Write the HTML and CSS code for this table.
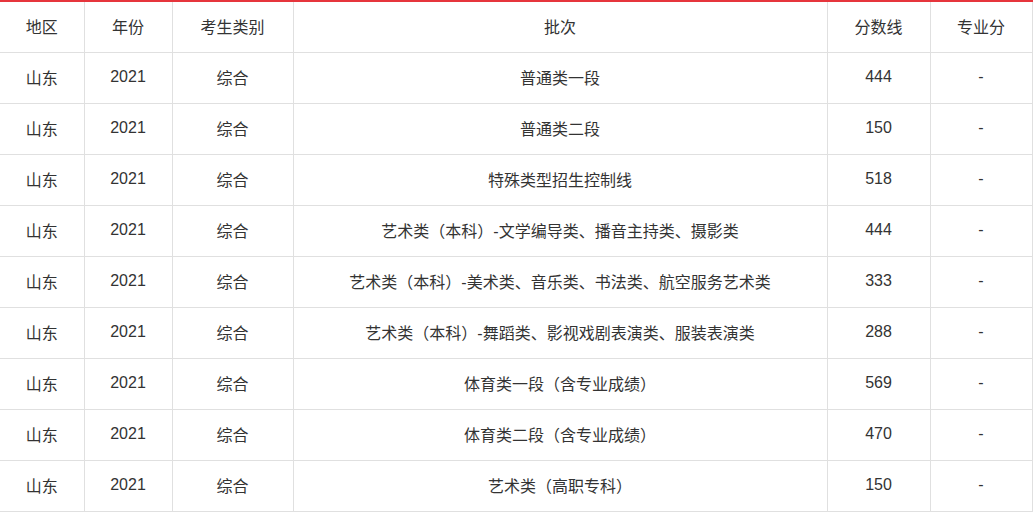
FILE: index.html
```html
<!DOCTYPE html>
<html lang="zh">
<head>
<meta charset="utf-8">
<link rel="stylesheet" href="styles.css">
</head>
<body>
<table class="score-table">
  <colgroup>
    <col class="c1"><col class="c2"><col class="c3"><col class="c4"><col class="c5"><col class="c6">
  </colgroup>
  <thead>
    <tr><th>地区</th><th>年份</th><th>考生类别</th><th>批次</th><th>分数线</th><th>专业分</th></tr>
  </thead>
  <tbody>
    <tr><td>山东</td><td>2021</td><td>综合</td><td>普通类一段</td><td>444</td><td>-</td></tr>
    <tr><td>山东</td><td>2021</td><td>综合</td><td>普通类二段</td><td>150</td><td>-</td></tr>
    <tr><td>山东</td><td>2021</td><td>综合</td><td>特殊类型招生控制线</td><td>518</td><td>-</td></tr>
    <tr><td>山东</td><td>2021</td><td>综合</td><td>艺术类（本科）-文学编导类、播音主持类、摄影类</td><td>444</td><td>-</td></tr>
    <tr><td>山东</td><td>2021</td><td>综合</td><td>艺术类（本科）-美术类、音乐类、书法类、航空服务艺术类</td><td>333</td><td>-</td></tr>
    <tr><td>山东</td><td>2021</td><td>综合</td><td>艺术类（本科）-舞蹈类、影视戏剧表演类、服装表演类</td><td>288</td><td>-</td></tr>
    <tr><td>山东</td><td>2021</td><td>综合</td><td>体育类一段（含专业成绩）</td><td>569</td><td>-</td></tr>
    <tr><td>山东</td><td>2021</td><td>综合</td><td>体育类二段（含专业成绩）</td><td>470</td><td>-</td></tr>
    <tr><td>山东</td><td>2021</td><td>综合</td><td>艺术类（高职专科）</td><td>150</td><td>-</td></tr>
  </tbody>
</table>
</body>
</html>
```

FILE: styles.css
```css
html, body {
  margin: 0;
  padding: 0;
  background: #fff;
}
.score-table {
  width: 1032px;
  table-layout: fixed;
  border-collapse: collapse;
  font-family: "Liberation Sans", Arial, "Noto Sans CJK SC", sans-serif;
  font-size: 16px;
  color: #333;
}
.c1 { width: 84px; }
.c2 { width: 88px; }
.c3 { width: 121px; }
.c4 { width: 534px; }
.c5 { width: 103px; }
.c6 { width: 102px; }
.score-table th,
.score-table td {
  height: 48px;
  padding: 0 0 2px;
  text-align: center;
  vertical-align: middle;
  font-weight: normal;
  border: 1px solid #e0e0e0;
}
.score-table th:first-child,
.score-table td:first-child {
  border-left: none;
}
.score-table thead th {
  border-top: 2px solid #e6353c;
}
```
